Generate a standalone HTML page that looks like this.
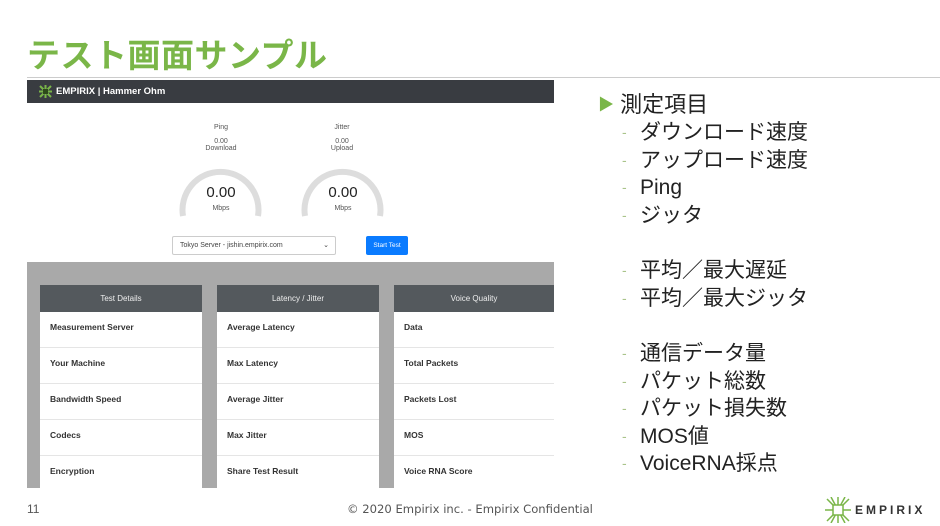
<!DOCTYPE html>
<html><head><meta charset="utf-8"><style>
*{margin:0;padding:0;box-sizing:border-box}
body{width:940px;height:526px;background:#fff;position:relative;overflow:hidden;font-family:"Liberation Sans","Noto Sans CJK JP",sans-serif}
.abs{position:absolute}
.title{left:27px;top:34px;font-size:33px;color:#7ab648;font-weight:bold;letter-spacing:0.5px;line-height:44px}
.hr{left:27px;top:77px;width:913px;height:1px;background:#ccc}
.shot{left:27px;top:80px;width:527px;height:408px;background:#fff;overflow:hidden}
.bar{left:0;top:0;width:527px;height:23px;background:#393c41;color:#fff;font-size:9.5px;font-weight:bold;line-height:23px;padding-left:29px}
.g{font-size:7px;color:#555;text-align:center;width:80px}
.gray{left:0;top:182px;width:527px;height:226px;background:#a9a9a9}
.card{top:23px;width:162px;height:210px;background:#fff}
.card .h{height:27px;background:#54595d;color:#eee;font-size:8px;text-align:center;line-height:27px}
.card .r{height:36px;border-bottom:1px solid #e5e5e5;font-size:8.5px;color:#333;padding-left:10px;line-height:31px;font-weight:bold;-webkit-text-stroke:0}
.list{left:622px;font-size:21px;color:#222;line-height:27.5px}
.list div{position:relative;padding-left:18px}
.list div:before{content:"-";position:absolute;left:0;color:#a9c48a;font-size:14px}
</style></head><body>
<div class="abs title">テスト画面サンプル</div>
<div class="abs hr"></div>
<div class="abs shot">
 <div class="abs bar">EMPIRIX | Hammer Ohm</div>
 <svg class="abs" style="left:12px;top:5px" width="13" height="13" viewBox="0 0 13 13"><path d="M1 1L12 12M12 1L1 12M6.5 0V13M0 6.5H13" stroke="#7ab648" stroke-width="2"/><rect x="4" y="4" width="5" height="5" fill="#2d4a1a"/></svg>
 <div class="abs g" style="left:154px;top:44px">Ping<br><br style="line-height:6px">0.00<br>Download</div>
 <div class="abs g" style="left:275px;top:44px">Jitter<br><br style="line-height:6px">0.00<br>Upload</div>
 <svg class="abs" style="left:150px;top:80px" width="90" height="60"><path d="M6 56A38 38 0 1 1 81 56" fill="none" stroke="#ddd" stroke-width="6"/></svg>
 <svg class="abs" style="left:272px;top:80px" width="90" height="60"><path d="M6 56A38 38 0 1 1 81 56" fill="none" stroke="#ddd" stroke-width="6"/></svg>
 <div class="abs" style="left:154px;top:104px;width:80px;text-align:center;font-size:15px;color:#222">0.00</div>
 <div class="abs" style="left:276px;top:104px;width:80px;text-align:center;font-size:15px;color:#222">0.00</div>
 <div class="abs g" style="left:154px;top:125px">Mbps</div>
 <div class="abs g" style="left:276px;top:125px">Mbps</div>
 <div class="abs" style="left:145px;top:156px;width:164px;height:19px;border:1px solid #ccc;border-radius:2px;font-size:7px;color:#444;line-height:17px;padding-left:7px">Tokyo Server - jishin.empirix.com<span style="position:absolute;right:6px">⌄</span></div>
 <div class="abs" style="left:339px;top:156px;width:42px;height:19px;background:#0a7bff;border-radius:2px;color:#fff;font-size:6.5px;text-align:center;line-height:19px">Start Test</div>
 <div class="abs gray">
  <div class="abs card" style="left:13px"><div class="h">Test Details</div><div class="r">Measurement Server</div><div class="r">Your Machine</div><div class="r">Bandwidth Speed</div><div class="r">Codecs</div><div class="r">Encryption</div></div>
  <div class="abs card" style="left:190px"><div class="h">Latency / Jitter</div><div class="r">Average Latency</div><div class="r">Max Latency</div><div class="r">Average Jitter</div><div class="r">Max Jitter</div><div class="r">Share Test Result</div></div>
  <div class="abs card" style="left:367px;width:160px"><div class="h">Voice Quality</div><div class="r">Data</div><div class="r">Total Packets</div><div class="r">Packets Lost</div><div class="r">MOS</div><div class="r">Voice RNA Score</div></div>
 </div>
</div>
<div class="abs" style="left:598px;top:91px;font-size:22px;color:#222;line-height:28px"><span style="color:#7ab648;font-size:16px;vertical-align:2px">▶</span> 測定項目</div>
<div class="abs list" style="top:119px"><div>ダウンロード速度</div><div>アップロード速度</div><div>Ping</div><div>ジッタ</div></div>
<div class="abs list" style="top:257px"><div>平均／最大遅延</div><div>平均／最大ジッタ</div></div>
<div class="abs list" style="top:340px"><div>通信データ量</div><div>パケット総数</div><div>パケット損失数</div><div>MOS値</div><div>VoiceRNA採点</div></div>
<div class="abs" style="left:27px;top:502px;font-size:12px;color:#555">11</div>
<div class="abs" style="left:347px;top:502px;font-size:11.6px;color:#555;font-family:'DejaVu Sans',sans-serif">© 2020 Empirix inc. - Empirix Confidential</div>
<svg class="abs" style="left:825px;top:497px" width="26" height="26" viewBox="0 0 26 26"><path d="M2 2L24 24M24 2L2 24M13 0V26M0 13H26M6 0L20 26M20 0L6 26" stroke="#7ab648" stroke-width="1.5"/><rect x="8" y="8" width="10" height="10" fill="#fff" stroke="#7ab648" stroke-width="1.5"/></svg>
<div class="abs" style="left:855px;top:503px;font-size:12px;font-weight:bold;color:#333;letter-spacing:3px">EMPIRIX</div>
</body></html>
